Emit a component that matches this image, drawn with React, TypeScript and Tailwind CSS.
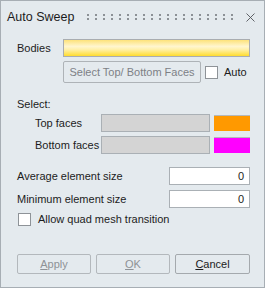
import React from "react";

const font = { fontFamily: '"Liberation Sans", Arial, sans-serif' };

function Check() {
  return <div className="w-[13px] h-[13px] shrink-0 bg-white border border-[#8e9398]" />;
}

function Grip() {
  // two rows of little dots, the drag handle in the title bar
  const cols = Array.from({ length: 19 });
  return (
    <div className="flex flex-col gap-[2px]">
      {[0, 1].map((r) => (
        <div key={r} className="flex gap-[6px]">
          {cols.map((_, i) => (
            <div key={i} className="w-[2px] h-[2px] bg-[#8c9196]" />
          ))}
        </div>
      ))}
    </div>
  );
}

function FaceRow({ label, swatch }: { label: string; swatch: string }) {
  return (
    <div className="flex items-center h-[18px]">
      <span className="w-[84px] shrink-0 pl-[18px] whitespace-nowrap text-[#1c1c1c]">{label}</span>
      <div className="w-[109px] h-full bg-[#d4d4d4] border border-[#aab0b5]" />
      <div className="ml-[4px] w-[36px] h-[16px] border-t border-[#b3b8bc]" style={{ background: swatch }} />
    </div>
  );
}

function SizeRow({ label }: { label: string }) {
  return (
    <div className="flex items-center justify-between h-[18px]">
      <span className="text-[#1c1c1c]">{label}</span>
      <div className="w-[81px] h-full bg-white border border-[#aab0b5] flex items-center justify-end pr-[5px] text-[#1c1c1c]">
        0
      </div>
    </div>
  );
}

export default function App() {
  return (
    <div
      className="w-[265px] h-[288px] border border-[#a7aeb4] bg-[#e4eaee] text-[11px] leading-none flex flex-col"
      style={font}
    >
      <div className="h-[32px] flex items-center pl-[6px] pr-[9px]">
        <span className="text-[12.5px] text-[#1c1c1c] w-[80px]">Auto Sweep</span>
        <Grip />
        <svg width="9" height="9" viewBox="0 0 9 9" className="ml-auto">
          <path d="M0.5 0.5 L8.5 8.5 M8.5 0.5 L0.5 8.5" stroke="#505458" strokeWidth="0.9" />
        </svg>
      </div>

      <div className="pl-[16px] pr-[14px] flex flex-col">
        <div className="mt-[6px] flex items-center h-[18px]">
          <span className="w-[46px] text-[#1c1c1c]">Bodies</span>
          <div
            className="flex-1 h-full border border-[#a9adb0]"
            style={{ background: "linear-gradient(to bottom, #fde27a 0%, #fff6cf 40%, #fff0a8 60%, #ffdc2e 100%)" }}
          />
        </div>

        <div className="mt-[4px] flex items-center h-[22px] pl-[46px]">
          <div className="w-[138px] h-full border border-[#aeb3b7] rounded-[2px] flex items-center justify-center text-[#7d8186]">
            Select Top/ Bottom Faces
          </div>
          <div className="ml-[4px]"><Check /></div>
          <span className="ml-[6px] text-[#1c1c1c]">Auto</span>
        </div>

        <div className="mt-[14px] h-[14px] flex items-center text-[#1c1c1c]">Select:</div>

        <div className="mt-[3px]"><FaceRow label="Top faces" swatch="#ff9900" /></div>
        <div className="mt-[4px]"><FaceRow label="Bottom faces" swatch="#ff00ff" /></div>

        <div className="mt-[13px]"><SizeRow label="Average element size" /></div>
        <div className="mt-[5px]"><SizeRow label="Minimum element size" /></div>

        <div className="mt-[5px] flex items-center h-[13px] pl-[1px]">
          <Check />
          <span className="ml-[7px] text-[#1c1c1c]">Allow quad mesh transition</span>
        </div>

        <div className="mt-[28px] flex gap-[5px] h-[20px]">
          <div className="w-[74px] h-full border border-[#b3b8bc] rounded-[2px] flex items-center justify-center text-[#8e9296]">
            <span><u>A</u>pply</span>
          </div>
          <div className="w-[74px] h-full border border-[#b3b8bc] rounded-[2px] flex items-center justify-center text-[#8e9296]">
            <span><u>O</u>K</span>
          </div>
          <div className="w-[75px] h-full border border-[#a4a9ad] rounded-[2px] flex items-center justify-center text-[#1c1c1c]">
            <span><u>C</u>ancel</span>
          </div>
        </div>
      </div>
    </div>
  );
}
